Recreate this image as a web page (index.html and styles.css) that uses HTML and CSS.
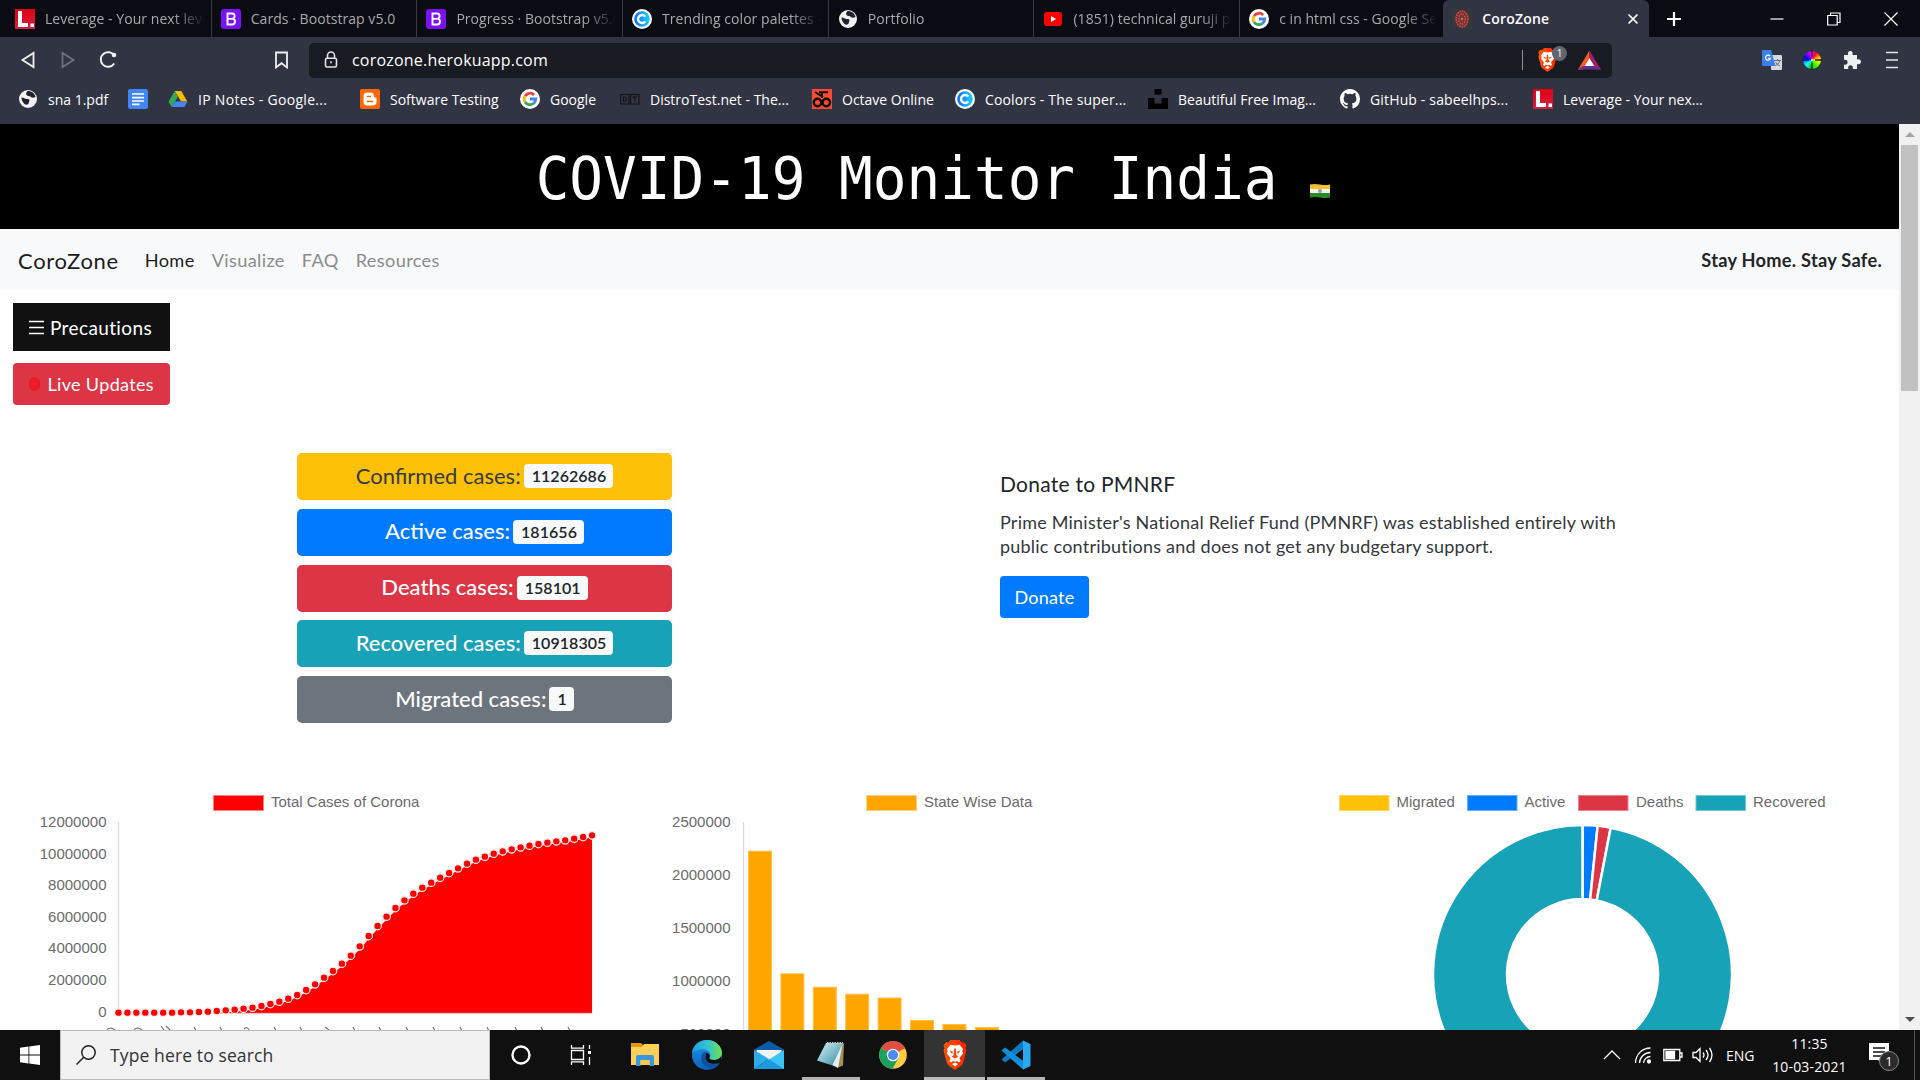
FILE: index.html
```html
<!DOCTYPE html>
<html lang="en">
<head>
<meta charset="utf-8">
<title>CoroZone</title>
<link rel="stylesheet" href="styles.css">
</head>
<body>
<svg class="defs" width="0" height="0">
  <defs>
    <linearGradient id="gRed" x1="0" y1="0" x2="0" y2="1"><stop offset="0" stop-color="#e3000f"/><stop offset="1" stop-color="#d11f45"/></linearGradient>
    <linearGradient id="gCool" x1="0" y1="0" x2="1" y2="0"><stop offset="0" stop-color="#0a6cff"/><stop offset="1" stop-color="#22d0ff"/></linearGradient>
    <linearGradient id="gEdge" x1="0" y1="0" x2="1" y2="0"><stop offset="0" stop-color="#1b9de2"/><stop offset=".5" stop-color="#33c3d8"/><stop offset="1" stop-color="#6be04a"/></linearGradient>
    <linearGradient id="gEdge2" x1="0" y1="0" x2="0" y2="1"><stop offset="0" stop-color="#1a9de8"/><stop offset="1" stop-color="#0c5fc0"/></linearGradient>
    <linearGradient id="gBrave" x1="0" y1="0" x2="1" y2="0"><stop offset="0" stop-color="#ff5601"/><stop offset="1" stop-color="#ff2200"/></linearGradient>
    <linearGradient id="gNote" x1="0" y1="0" x2="1" y2="1"><stop offset="0" stop-color="#d9f1f4"/><stop offset=".6" stop-color="#6fb5c4"/><stop offset="1" stop-color="#3a6c78"/></linearGradient>
    <symbol id="lev" viewBox="0 0 20 20"><rect width="20" height="20" fill="url(#gRed)"/><path d="M3 2h4v12h6v4H3z" fill="#fff"/><rect x="15.500" y="14.500" width="3.500" height="3.500" fill="#fff"/></symbol>
    <symbol id="boot" viewBox="0 0 20 20"><rect width="20" height="20" rx="3" fill="#7a12f5"/><path d="M6.500 4.500h4.200a2.600 2.600 0 0 1 .6 5.200 2.900 2.900 0 0 1-.4 5.800H6.500zM6.500 9.900h4.500" fill="none" stroke="#fff" stroke-width="1.900"/></symbol>
    <symbol id="cool" viewBox="0 0 20 20"><circle cx="10" cy="10" r="10" fill="#fff"/><circle cx="10" cy="10" r="7.800" fill="url(#gCool)"/><path d="M13.200 7.600a4 4 0 1 0 0 4.800" fill="none" stroke="#fff" stroke-width="2.400"/></symbol>
    <symbol id="globe" viewBox="0 0 20 20"><circle cx="10" cy="10" r="9" fill="#f1f1f1"/><path d="M3.500 8.500c3 .2 4 1.800 6.500 1.600 2.500 0 1 3 .5 4.500-.5 1.500-3 1.400-4 .4-1.500-1.500-3-3.500-3-6.500zM9.500 2c-1 1.500-2 2.500-1 4 1.200 1.500 3 .5 4.500 2 .8 1 2.500 1 4.500 0-1-4-4-6-8-6z" fill="#20222c"/></symbol>
    <symbol id="yt" viewBox="0 0 20 20"><rect x="1" y="3" width="18" height="14" rx="3" fill="#f00"/><path d="M8 7l5 3-5 3z" fill="#fff"/></symbol>
    <symbol id="goog" viewBox="0 0 20 20"><circle cx="10" cy="10" r="10" fill="#fff"/><g fill="none" stroke-width="2.800"><path d="M14.100 5.900A5.800 5.800 0 0 0 5 7.100" stroke="#ea4335"/><path d="M5 7.100a5.800 5.800 0 0 0 0 5.800" stroke="#fbbc05"/><path d="M5 12.900a5.800 5.800 0 0 0 8.700 1.400" stroke="#34a853"/><path d="M13.700 14.300a5.800 5.800 0 0 0 2.100-4.300H10" stroke="#4285f4"/></g></symbol>
    <symbol id="virus" viewBox="0 0 20 20"><rect width="20" height="20" fill="#38383b"/><ellipse cx="10" cy="10" rx="6.500" ry="8.500" fill="#7a3432"/><g fill="none" stroke="#cf4f4a" stroke-width="1.400" stroke-dasharray="1.500 1"><ellipse cx="10" cy="10" rx="6" ry="8"/><ellipse cx="10" cy="10" rx="3.300" ry="5"/></g><circle cx="10" cy="10" r="1.200" fill="#aa8080"/></symbol>
    <symbol id="docs" viewBox="0 0 20 20"><rect width="20" height="20" rx="2" fill="#4285f4"/><path d="M4 5h12M4 8.600h12M4 12h12M4 15.300h7.500" stroke="#fff" stroke-width="1.700"/></symbol>
    <symbol id="drive" viewBox="0 0 20 20"><path d="M6.700 2h6.600l6 10.500h-6.200z" fill="#fbbc04"/><path d="M6.700 2L.5 12.800l3.200 5.300L10 7.400z" fill="#34a853"/><path d="M3.700 18.100l3.200-5.600h12.600l-3.100 5.600z" fill="#4285f4"/></symbol>
    <symbol id="blog" viewBox="0 0 20 20"><rect width="20" height="20" rx="2" fill="#ff6600"/><path d="M3.500 7.300a3.800 3.800 0 0 1 3.800-3.800h3a3.600 3.600 0 0 1 3.600 3.500c0 1.300.8 1.500 1.700 1.600.6.100.9.400.9 1v3.100a3.800 3.800 0 0 1-3.800 3.800H7.300a3.800 3.800 0 0 1-3.800-3.800z" fill="#fff"/><path d="M7.500 7.500h2.800M7.500 12.500h5" stroke="#ff6600" stroke-width="1.700" stroke-linecap="round"/></symbol>
    <symbol id="dt" viewBox="0 0 20 20"><g fill="none" stroke="#15161c" stroke-width="1.200"><rect x=".6" y="5.500" width="8.300" height="9.500"/><rect x="10.600" y="5.500" width="8.300" height="9.500"/><path d="M3.500 8h1.300q1.700.2 1.700 2.200t-1.700 2.300H3.500zM12.700 8.200h4.300M14.800 8.200v4.600"/></g></symbol>
    <symbol id="oct" viewBox="0 0 20 20"><rect width="20" height="20" fill="#ff4a33"/><g fill="none" stroke="#0b0b0b" stroke-width="2.400"><circle cx="5.500" cy="13.500" r="3.700"/><circle cx="14.300" cy="13.500" r="3.700"/><path d="M3 3l8 5M7 3.200h9" stroke-width="2"/><path d="M10 4v5" stroke-width="2"/></g></symbol>
    <symbol id="uns" viewBox="0 0 20 20"><path d="M6.500 0h7v5.500h-7zM0 9h6.500v5.500h7V9H20v11H0z" fill="#000"/></symbol>
    <symbol id="gh" viewBox="0 0 16 16"><path fill="#fff" d="M8 0C3.580 0 0 3.580 0 8c0 3.540 2.290 6.530 5.470 7.590.4.070.55-.17.55-.38 0-.19-.01-.82-.01-1.490-2.010.37-2.530-.49-2.690-.94-.09-.23-.48-.94-.82-1.130-.28-.15-.68-.52-.01-.53.63-.01 1.080.58 1.230.82.72 1.210 1.870.87 2.330.66.070-.52.28-.87.51-1.070-1.780-.2-3.640-.89-3.640-3.950 0-.87.31-1.590.82-2.150-.08-.2-.36-1.020.08-2.120 0 0 .67-.21 2.200.82a7.600 7.600 0 0 1 4 0c1.530-1.040 2.200-.82 2.200-.82.44 1.100.16 1.920.08 2.120.51.56.82 1.270.82 2.150 0 3.070-1.870 3.750-3.650 3.950.29.25.54.73.54 1.480 0 1.070-.01 1.930-.01 2.200 0 .21.15.46.55.38A8 8 0 0 0 16 8c0-4.420-3.580-8-8-8z"/></symbol>
    <symbol id="brave" viewBox="0 0 26 30"><path d="M6.500 2.500L8.500 0h9l2 2.500 2.500-.3 2.500 3-1 3 1 2-3.200 12.300q-.6 2-2.300 3.200L13 30l-6-4.300q-1.700-1.200-2.300-3.200L1.500 10.200l1-2-1-3 2.500-3z" fill="url(#gBrave)"/><path d="M13 5.500l4.500-.8 3.500 4.300-.7 2.500 1 1.700-3.300 4-.5 1.600 1.200 2-1.700 1.600-2-1.400-2 .8-2-.8-2 1.400-1.700-1.600 1.200-2-.5-1.600-3.300-4 1-1.700L5 9l3.500-4.300zM13 22.500l3 1.500-3 2.500-3-2.500z" fill="#fff"/><path d="M7.500 10.500l3.500 1.300-.8 2.200zM18.500 10.500L15 11.800l.8 2.200zM12.200 8.500h1.600l.6 6.500 1.800 1.700-3.200 1.800-3.200-1.800 1.800-1.700z" fill="#ff4500"/></symbol>
  </defs>
</svg>

<header class="browser">
  <div class="tabs">
    <div class="tab"><svg><use href="#lev"/></svg><span class="fade">Leverage - Your next level</span></div>
    <div class="tab"><svg><use href="#boot"/></svg><span class="fade short">Cards · Bootstrap v5.0</span></div>
    <div class="tab"><svg><use href="#boot"/></svg><span class="fade">Progress · Bootstrap v5.0</span></div>
    <div class="tab"><svg><use href="#cool"/></svg><span class="fade">Trending color palettes - Co</span></div>
    <div class="tab"><svg><use href="#globe"/></svg><span class="fade">Portfolio</span></div>
    <div class="tab"><svg><use href="#yt"/></svg><span class="fade">(1851) technical guruji pro</span></div>
    <div class="tab last"><svg><use href="#goog"/></svg><span class="fade">c in html css - Google Search</span></div>
    <div class="tab active"><svg><use href="#virus"/></svg><span>CoroZone</span><svg class="x" viewBox="0 0 12 12"><path d="M1.500 1.500l9 9M10.500 1.500l-9 9"/></svg></div>
    <svg class="plus" viewBox="0 0 16 16"><path d="M8 1v14M1 8h14"/></svg>
    <div class="winbtns">
      <svg viewBox="0 0 14 14"><path d="M.5 7h13"/></svg>
      <svg viewBox="0 0 14 14"><path d="M.7 3.500h9.500V13H.7zM3.500 3.500V1h9.500v9.500h-2.800"/></svg>
      <svg viewBox="0 0 14 14"><path d="M.5.5l13 13M13.500.5l-13 13"/></svg>
    </div>
  </div>
  <div class="toolbar">
    <svg class="nav" viewBox="0 0 20 20"><path d="M15.500 3v14L4.500 10z"/></svg>
    <svg class="nav dim" viewBox="0 0 20 20"><path d="M4.500 3v14l11-7z"/></svg>
    <svg class="nav reload" viewBox="0 0 20 20"><path d="M16.200 13.500A7.300 7.300 0 1 1 16.500 6"/><circle cx="16" cy="5" r="2.300" fill="#f0f0f2" stroke="none"/></svg>
    <svg class="nav mark" viewBox="0 0 20 20"><path d="M4 2.500h11v15L9.500 13.200 4 17.500z"/></svg>
    <div class="url">
      <svg class="lock" viewBox="0 0 14 18"><path d="M3.500 7V4.500a3.500 3.500 0 0 1 7 0V7"/><rect x="1.500" y="7.200" width="11" height="8.800" rx="1.500"/><path d="M7 10.300v2"/></svg>
      <span>corozone.herokuapp.com</span>
      <i class="divider"></i>
      <div class="shield"><svg><use href="#brave"/></svg><b>1</b></div>
      <svg class="bat" viewBox="0 0 24 20"><path d="M12 0L0 20h5l7-12z" fill="#ff5a1c"/><path d="M12 0l12 20h-5L12 8z" fill="#9e1f63"/><path d="M0 20h24l-5-3.700H5z" fill="#662d91"/><path d="M12 8l5 8.300H7z" fill="#fff"/></svg>
    </div>
    <div class="ext">
      <svg viewBox="0 0 20 20"><rect x="9" y="5" width="11" height="15" rx="1" fill="#d7dadd"/><path d="M12 10.500h7M15.500 9v1.500M17.800 10.800q-.5 3-4.500 5M13.600 12q1 2.800 4.400 4" stroke="#616f7c" fill="none"/><path d="M1.200 0H9l4.500 16H1.200Q0 16 0 14.800V1.200Q0 0 1.200 0z" fill="#3d80ea"/><path d="M8 6.200a2.500 2.500 0 1 0 .4 2.200H6.200" fill="none" stroke="#fff" stroke-width="1.300"/></svg>
      <div class="wheel"><svg viewBox="0 0 20 20"><path d="M10 0v7M10 13v7M0 10h7M13 10h7" stroke="#1b1b20" stroke-width="1.300"/><circle cx="10" cy="10" r="1" fill="#eee"/></svg></div>
      <svg viewBox="0 0 20 20"><path fill="#eef0f2" d="M2 5h4.200C5.300 2.800 6.300 1 8.300 1s3 1.800 2.100 4H15v4.500c2-.8 4 0 4 2.200s-2 3-4 2.200V19h-4.300c.7-2.300-.4-3.700-2.200-3.700S5.700 16.700 6.300 19H2v-4.500c2.300.7 3.600-.4 3.600-2.200S4.300 9.500 2 10z"/></svg>
      <svg viewBox="0 0 20 20"><path d="M4 2.500h12M4 10h12M4 17.500h12" stroke="#e6e6ea" stroke-width="1.700"/></svg>
    </div>
  </div>
  <div class="bookmarks">
    <a><svg><use href="#globe"/></svg>sna 1.pdf</a>
    <a><svg><use href="#docs"/></svg></a>
    <a class="wide"><svg><use href="#drive"/></svg>IP Notes - Google...</a>
    <a><svg><use href="#blog"/></svg>Software Testing</a>
    <a><svg><use href="#goog"/></svg>Google</a>
    <a><svg><use href="#dt"/></svg>DistroTest.net - The...</a>
    <a><svg><use href="#oct"/></svg>Octave Online</a>
    <a class="mid-wide"><svg><use href="#cool"/></svg>Coolors - The super...</a>
    <a><svg><use href="#uns"/></svg>Beautiful Free Imag...</a>
    <a class="mid-wide"><svg><use href="#gh"/></svg>GitHub - sabeelhps...</a>
    <a><svg><use href="#lev"/></svg>Leverage - Your nex...</a>
  </div>
</header>

<div class="view">
  <main class="page">
    <h1 class="title"><span>COVID-19 Monitor India</span>
      <svg class="flag" viewBox="0 0 20 14"><path d="M0 .5q5-1 10 0t10 0V5H0z" fill="#f7c12c"/><path d="M0 5h20v4H0z" fill="#f4f4f0"/><path d="M0 9h20v4.500q-5 1-10 0t-10 0z" fill="#2c8a26"/><circle cx="10" cy="7" r="2" fill="#8d9cc4"/></svg>
    </h1>
    <nav class="navbar">
      <a class="brand">CoroZone</a><a class="on">Home</a><a>Visualize</a><a>FAQ</a><a>Resources</a>
      <strong>Stay Home. Stay Safe.</strong>
    </nav>
    <div class="side">
      <button class="prec"><svg viewBox="0 0 15 15"><path d="M0 1.500h15M0 7.500h15M0 13.500h15"/></svg>Precautions</button>
      <button class="live"><i></i>Live Updates</button>
    </div>
    <section class="mid">
      <div class="cases">
        <div class="case warn">Confirmed cases: <b>11262686</b></div>
        <div class="case blue">Active cases: <b>181656</b></div>
        <div class="case red">Deaths cases: <b>158101</b></div>
        <div class="case teal">Recovered cases: <b>10918305</b></div>
        <div class="case gray">Migrated cases: <b>1</b></div>
      </div>
      <div class="donate">
        <h5>Donate to PMNRF</h5>
        <p>Prime Minister's National Relief Fund (PMNRF) was established entirely with<br>public contributions and does not get any budgetary support.</p>
        <button>Donate</button>
      </div>
    </section>
    <section class="charts">
      <svg id="line" viewBox="0 0 640 250">
        <rect x="213.500" y="15.500" width="50" height="15" fill="red" stroke="#ff8080"/>
        <text x="271" y="27">Total Cases of Corona</text>
        <g text-anchor="end">
          <text x="106.500" y="47">12000000</text><text x="106.500" y="79">10000000</text><text x="106.500" y="110">8000000</text><text x="106.500" y="142">6000000</text><text x="106.500" y="173">4000000</text><text x="106.500" y="205">2000000</text><text x="106.500" y="237">0</text>
        </g>
        <path d="M118.500 42v191" class="axis"/>
        <g id="points"></g>
        <path class="ticks" d="M107 249.500q4-3 8 .5M134 249.500q4-3 8 .5M161 246l3 4M166 246l4 4M194 247l2 4M220 247l2 4M244 249q3-3 5 1M274 247l2 4M300 247l2 4M325 247l4 3M353 247l2 4M379 247l2 4M406 247l2 4M433 247l2 4M460 247l2 4M487 247l2 4M515 247l2 4M541 247l2 4M568 247l2 4"/>
      </svg>
      <svg id="bar" viewBox="640 0 640 250">
        <rect x="866.500" y="15.500" width="50" height="15" fill="orange" stroke="#ffd27f"/>
        <text x="924" y="27">State Wise Data</text>
        <g text-anchor="end">
          <text x="730.500" y="47">2500000</text><text x="730.500" y="100">2000000</text><text x="730.500" y="153">1500000</text><text x="730.500" y="206">1000000</text><text x="730.500" y="259">500000</text>
        </g>
        <path d="M743.500 42v208" class="axis"/>
        <g id="bars" fill="orange" stroke="#ffc04d"></g>
      </svg>
      <svg id="ring" viewBox="1280 0 619 250">
        <rect x="1339.500" y="15.500" width="49.500" height="15" fill="#ffc107" stroke="#ffd75e"/><text x="1396.500" y="27">Migrated</text>
        <rect x="1467.500" y="15.500" width="49.500" height="15" fill="#007bff" stroke="#66b0ff"/><text x="1524.500" y="27">Active</text>
        <rect x="1578.500" y="15.500" width="49.500" height="15" fill="#dc3545" stroke="#ea868f"/><text x="1636" y="27">Deaths</text>
        <rect x="1696" y="15.500" width="49.500" height="15" fill="#17a2b8" stroke="#74c7d4"/><text x="1753" y="27">Recovered</text>
        <g id="slices" stroke="#fff" stroke-width="2.500"></g>
      </svg>
    </section>
  </main>
  <div class="scroll"><i class="up"></i><div class="thumb"></div><i class="down"></i></div>
</div>

<footer class="taskbar">
  <div class="start"><svg viewBox="0 0 20 20"><path d="M0 2.800l8.500-1.200v8H0zM9.300 1.500L20 0v9.600H9.300zM0 10.400h8.500v8L0 17.200zM9.300 10.400H20V20L9.300 18.500z" fill="#fff"/></svg></div>
  <div class="search"><svg viewBox="0 0 20 20"><circle cx="12.500" cy="7.500" r="6.700"/><path d="M7.700 12.300L.5 19.500"/></svg>Type here to search</div>
  <div class="app"><svg viewBox="0 0 30 30"><circle cx="15" cy="15" r="8.500" fill="none" stroke="#fff" stroke-width="2.400"/></svg></div>
  <div class="app"><svg viewBox="0 0 30 30"><path d="M3.500 5v3.200h12V5M3.500 25v-3.200h12V25M3.500 10.500h12v9h-12zM21.500 5v4M21.500 17v8" fill="none" stroke="#fff" stroke-width="1.300"/><path d="M20 11h3v3h-3z" fill="#fff"/></svg></div>
  <div class="app"><svg viewBox="0 0 30 30"><path d="M1 3h10l2.500 2.500L12 8H1z" fill="#dd9a0c"/><path d="M1 7h11l2-3h15v21H1z" fill="#fdd05a"/><path d="M6 26V17q0-2 2-2h14q2 0 2 2v9h-4.500v-6h-9v6z" fill="#3b97dd"/><path d="M10.500 20h9v5h-9z" fill="#fbc94a"/></svg></div>
  <div class="app"><svg viewBox="0 0 30 30"><circle cx="15" cy="15" r="15" fill="url(#gEdge2)"/><path d="M0 13.500C.5 5 7.300 0 15 0c8.500 0 15 6.300 15 12.500 0 5-3.800 7.500-8 7.500-3.500 0-5-1.300-4.300-2.300C20 14 17 9.300 11 9.300 5.500 9.300 1 11.800 0 13.500z" fill="url(#gEdge)"/><path d="M13.300 11.500C7 14 7.500 26 18.500 28.300q5-1 9.300-5.800c-4.500 2-11 .8-12.800-3.500-1-2.500-.5-5-1.700-7.500z" fill="#12509e"/><path d="M14 12.500c3.500 1 4.500 3 3.500 5-.7 1.300.8 2.500 4.500 2.500 3 0 5.500-1 7-3.500l1 4-2.500 2.500c-5 1.500-12 1-13.500-4-.7-2.500.5-5 0-6.500z" fill="#101010"/></svg></div>
  <div class="app"><svg viewBox="0 0 30 30"><path d="M0 9.500L15 1l15 8.500V18H0z" fill="#0b5aa8"/><path d="M2.500 10h25v10h-25z" fill="#f3f3f3"/><path d="M0 10l15 9-15 10z" fill="#29aeea"/><path d="M30 10L0 29h30z" fill="#3cc4f5"/><path d="M15 19.300L30 29H0z" fill="#1d97e0"/></svg></div>
  <div class="app run"><svg viewBox="0 0 30 30"><path d="M22 3l6 .5-1 22-5 2z" fill="#a98d58"/><path d="M10 3h16l-5 24L1 20.500z" fill="url(#gNote)"/><path d="M26.500 4l-4.500 24-5.500-3z" fill="#e3eef0"/><path d="M11 3h16" stroke="#c9c9c9" stroke-width="2" stroke-dasharray="1.500 1"/></svg></div>
  <div class="app"><svg viewBox="0 0 30 30"><circle cx="15" cy="15" r="13.800" fill="#ffcd40"/><path d="M15 15L3 8.100A13.800 13.800 0 0 1 27 8.100z" fill="#dd5144"/><path d="M15 15L3 8.100A13.800 13.800 0 0 0 14.500 28.800L20.500 18z" fill="#1ba15f"/><path d="M15 8.500h12.200l-1-2-11-1z" fill="#dd5144"/><circle cx="15" cy="15" r="6.300" fill="#f5f5f5"/><circle cx="15" cy="15" r="5" fill="#4a8af4"/></svg></div>
  <div class="app cur"><svg viewBox="0 0 26 30"><use href="#brave"/></svg></div>
  <div class="app run"><svg viewBox="0 0 30 30"><path d="M22 .5l7.500 3.500v22L22 29.500z" fill="#28a8ef"/><path d="M22 .5v8.700L4 22.500l-3.500-3L22 .5z" fill="#0a7cc4"/><path d="M22 29.500v-8.700L4 7.500l-3.500 3L22 29.500z" fill="#1090dc"/></svg></div>
  <div class="tray">
    <svg class="t1" viewBox="0 0 20 20"><path d="M2 14l8-8 8 8"/></svg>
    <svg class="t2" viewBox="0 0 20 20"><path d="M2.500 18A15 15 0 0 1 17.500 3M6.500 18A11 11 0 0 1 17.500 7.500M10.500 18a7 7 0 0 1 7-6.500"/><circle cx="16" cy="16.500" r="1.500" fill="#fff"/></svg>
    <svg class="t3" viewBox="0 0 20 20"><path d="M.8 4.500h16v11h-16zM17 8h2v4h-2"/><path d="M3 6.500h8.500v7H3z" fill="#fff"/></svg>
    <svg class="t4" viewBox="0 0 22 20"><path d="M1 7.500h3l4-4v13l-4-4H1zM11 7.500q2 2.500 0 5M14 5q4 5 0 10M17.500 3q5 7 0 14"/></svg>
    <span class="eng">ENG</span>
    <div class="clock"><span>11:35</span><span>10-03-2021</span></div>
    <div class="notif"><svg viewBox="0 0 20 20"><path d="M0 0h20v17h-7v3l-4-3H0z" fill="#fff"/><path d="M4 5h12M4 9h12M4 13h8" stroke="#101010" stroke-width="1.300"/></svg><b>1</b></div>
    <i class="peek"></i>
  </div>
</footer>
<script src="charts.js"></script>
</body>
</html>
```
FILE: styles.css
```css
* { box-sizing: border-box; }
body { margin: 0; width: 1920px; height: 1080px; overflow: hidden; background: #fff; font-family: "Open Sans", "Noto Sans", sans-serif; display: flex; flex-direction: column; }
.defs { position: absolute; }
button { border: 0; font: inherit; margin: 0; padding: 0; }

.browser { height: 124px; background: #313443; color: #fff; flex: none; }
.tabs { height: 37px; background: #0b0b14; display: flex; align-items: stretch; padding-left: 6px; }
.tab { width: 205.700px; display: flex; align-items: center; padding: 0 6px 0 9px; font-size: 14px; color: #a9a9ab; border-right: 1px solid #3b3b40; white-space: nowrap; }
.tab svg { width: 20px; height: 20px; flex: none; margin-right: 10px; }
.tab span { letter-spacing: .05px; }
.tab .fade { overflow: hidden; flex: 1; -webkit-mask-image: linear-gradient(to right, #000 80%, transparent 100%); mask-image: linear-gradient(to right, #000 80%, transparent 100%); }
.tab .short { -webkit-mask-image: none; mask-image: none; }
.tab.last { border-right: 0; width: 203px; }
.tab.active { width: 206px; background: #313443; border: 0; border-radius: 6px 6px 0 0; color: #fff; font-weight: 600; padding-right: 10px; }
.tab.active span { letter-spacing: .2px; }
.tab.active .x { margin: 0 0 0 auto; width: 12px; height: 12px; stroke: #fff; stroke-width: 1.700; }
.plus { width: 16px; height: 16px; margin: 11px 0 0 17px; stroke: #fff; stroke-width: 2.200; }
.winbtns { margin-left: auto; display: flex; gap: 43px; padding: 12px 22px 0 0; }
.winbtns svg { width: 14px; height: 14px; fill: none; stroke: #fff; stroke-width: 1.200; }

.toolbar { height: 46px; display: flex; align-items: center; padding: 0 18px 0 18px; }
.nav { width: 20px; height: 20px; fill: none; stroke: #f0f0f2; stroke-width: 1.800; margin-right: 20px; }
.nav.dim { stroke: #6e707b; }
.nav.reload { stroke-width: 2; margin-right: 154px; }
.nav.mark { margin-right: 17px; }
.url { width: 1303px; height: 35px; background: #181b21; border-radius: 5px; display: flex; align-items: center; font-size: 16px; padding: 0 11px 0 15px; }
.url span { letter-spacing: .2px; }
.lock { width: 14px; height: 18px; fill: none; stroke: #e2e2e4; stroke-width: 1.600; margin-right: 14px; }
.divider { width: 1px; height: 20px; background: #8c8e95; margin-left: auto; }
.shield { width: 33px; height: 24px; margin: 0 8px 0 14px; position: relative; }
.shield svg { width: 21px; height: 24px; }
.shield b { position: absolute; left: 15px; top: -2px; width: 15px; height: 15px; border-radius: 8px; background: #62656f; font-size: 10px; line-height: 15px; text-align: center; font-weight: 400; }
.bat { width: 23px; height: 20px; }
.ext { margin-left: auto; display: flex; align-items: center; gap: 20px; }
.ext svg { width: 20px; height: 20px; display: block; }
.wheel { width: 18px; height: 18px; margin: 0 1px; border-radius: 50%; background: conic-gradient(#f0f, #f02, #f80, #ff0 25%, #0f0 45%, #0a0, #0fa, #0ff 65%, #00f 80%, #80f, #f0f); }
.wheel svg { margin: -1px; }

.bookmarks { display: grid; grid-template-columns: 110px 40px 192px 160px 100px 192px 143px 193px 192px 193px 200px; padding: 6px 0 0 18px; font-size: 14px; }
.bookmarks a { display: flex; align-items: center; height: 20px; white-space: nowrap; }
.bookmarks svg { width: 20px; height: 20px; margin-right: 10px; flex: none; }
.bookmarks .wide { letter-spacing: .3px; }
.bookmarks .mid-wide { letter-spacing: .15px; }

.view { flex: 1; display: flex; min-height: 0; }
.page { width: 1899px; overflow: hidden; font-family: Lato, sans-serif; color: #212529; }
.title { margin: 0; height: 105px; background: #000; color: #fff; display: flex; align-items: center; justify-content: center; font: 400 56px/105px "DejaVu Sans Mono", monospace; padding-right: 33px; }
.title span { transform: translateY(2px) scaleY(1.05); }
.flag { width: 20px; height: 14px; margin: 29px 0 0 33px; }
.navbar { height: 61px; background: #f8f9fa; display: flex; align-items: center; padding: 1px 17px 0 18px; font-size: 18.200px; color: #8a8b8c; }
.navbar a { margin-right: 17px; letter-spacing: .35px; }
.navbar .brand { color: #1c1d1e; font-size: 22px; margin-right: 26px; letter-spacing: .65px; }
.navbar .on { color: #1c1d1e; }
.navbar strong { margin-left: auto; color: #212529; letter-spacing: .28px; }
.side { padding: 13px; display: flex; flex-direction: column; gap: 12px; width: 183px; height: 128px; color: #fff; }
.side button { color: #fff; display: flex; align-items: center; padding: 0 16px; width: 157px; white-space: nowrap; }
.prec { background: #111; height: 48px; font-size: 19px; letter-spacing: .38px; }
.prec svg { width: 15px; height: 15px; stroke: #fff; stroke-width: 1.400; margin-right: 6px; }
.live { background: #dc3545; height: 42px; border-radius: 4px; font-size: 18px; letter-spacing: .35px; }
.live i { width: 13px; height: 14px; border-radius: 7px; background: #ed1c24; margin-right: 7px; }
.mid { display: flex; height: 362px; padding: 35px 0 0 297px; }
.cases { width: 375px; display: flex; flex-direction: column; gap: 8.800px; }
.case { height: 47px; flex: none; border-radius: 5px; display: flex; align-items: center; justify-content: center; gap: 3px; color: #fff; font-size: 22px; font-weight: 500; padding-bottom: 3px; }
.case b { background: #f8f9fa; color: #212529; border-radius: 4px; height: 24px; line-height: 24px; padding: 0 7px 0 8px; font-size: 16px; font-weight: 600; letter-spacing: .05px; margin-top: 2px; }
.warn { background: #ffc107; color: #343a40; font-weight: 400; }
.blue { background: #007bff; }
.red { background: #dc3545; }
.teal { background: #17a2b8; }
.gray { background: #6c757d; }
.donate { margin-left: 328px; padding-top: 18px; }
.donate h5 { margin: 0; font-size: 21px; font-weight: 400; line-height: 26px; letter-spacing: .25px; }
.donate p { margin: 13px 0 17px; font-size: 18px; line-height: 24.300px; white-space: nowrap; letter-spacing: .22px; color: #33373b; }
.donate button { background: #007bff; color: #fff; width: 89px; height: 42px; border-radius: 4px; font-size: 18px; letter-spacing: .25px; }
.charts { display: grid; grid-template-columns: 640px 640px 619px; height: 250px; }
.charts svg { width: 100%; height: 250px; display: block; }
.charts text { font: 15px "Liberation Sans", sans-serif; fill: #6b6b6b; }
.axis { stroke: #dcdcdc; stroke-width: 1.300; fill: none; }
.ticks { stroke: #777; fill: none; stroke-width: 1.200; }
.scroll { width: 21px; background: #f1f1f1; display: flex; flex-direction: column; align-items: center; padding: 8px 0; }
.scroll i { border: 5px solid transparent; }
.up { border-bottom-color: #a3a3a3 !important; border-top: 0 !important; }
.down { border-top-color: #505050 !important; border-bottom: 0 !important; margin-top: auto; }
.thumb { width: 17px; height: 246px; background: #c1c1c1; margin-top: 8px; }

.taskbar { height: 50px; background: #101010; display: flex; color: #fff; flex: none; }
.start { width: 60px; display: flex; align-items: center; justify-content: center; }
.start svg { width: 20px; height: 20px; }
.search { width: 430px; background: #f2f2f2; border: 1px solid #bdbdbd; color: #333; display: flex; align-items: center; font-size: 17.500px; letter-spacing: .12px; padding-left: 15px; }
.search svg { width: 20px; height: 20px; margin-right: 14px; fill: none; stroke: #222; stroke-width: 1.500; }
.app { width: 62px; display: flex; align-items: center; justify-content: center; border-bottom: 3px solid transparent; padding-top: 3px; flex: none; }
.app svg { width: 30px; height: 30px; }
.app.run { border-image: linear-gradient(to right, transparent 5px, #b3b3b3 5px, #b3b3b3 57px, transparent 57px) 3; }
.app.cur { width: 61px; background: #333; border-bottom-color: #bbb; }
.tray { margin-left: auto; display: flex; align-items: center; font-size: 14px; }
.tray svg { width: 20px; height: 20px; fill: none; stroke: #fff; stroke-width: 1.300; }
.t1 { margin-right: 11px; } .t2 { margin-right: 10px; } .t3 { margin-right: 9px; }
.tray .t4 { width: 22px; margin-right: 12px; }
.eng { width: 31px; letter-spacing: 0; }
.clock { width: 105px; text-align: center; display: flex; flex-direction: column; line-height: 23px; padding-bottom: 1px; letter-spacing: .15px; }
.notif { position: relative; width: 20px; height: 20px; margin: -4px 25px 0 7px; }
.tray .notif svg { stroke: none; display: block; }
.notif b { position: absolute; left: 10px; top: 8px; width: 20px; height: 20px; border-radius: 50%; background: #2b2b2b; border: 1px solid #888; font-size: 13px; line-height: 18px; font-weight: 400; text-align: center; }
.peek { width: 1px; height: 50px; background: #555; margin-right: 5px; }
```
FILE: charts.js
```js
const NS = "http://www.w3.org/2000/svg";
function add(parent, tag, attrs) {
  const el = document.createElementNS(NS, tag);
  for (const key in attrs) el.setAttribute(key, attrs[key]);
  document.getElementById(parent).appendChild(el);
}

// Cumulative cases, as thirds of a pixel below the top of the chart.
const totals = [698,698,698,698,698,698,698,697,697,696,695,693,691,689,686,683,678,672,665,656,645,630,613,593,573,551,527,499,468,438,410,384,361,341,323,308,293,279,265,251,239,230,221,214,208,202,197,192,188,184,181,176,171,166];
const pts = totals.map((v, i) => [118.5 + i * 8.935, v / 3]);
const path = "M" + pts.map(p => p.join(" ")).join("L");
add("points", "path", { d: path + "V233H118.5Z", fill: "red" });
add("points", "path", { d: "M118 233.300H592", stroke: "#f3b3b3", fill: "none" });
add("points", "path", { d: path, stroke: "#fbf0f0", "stroke-width": 4, fill: "none" });
pts.forEach(p => add("points", "circle", { cx: p[0], cy: p[1], r: 3.8, fill: "red", stroke: "#fdf2f2", "stroke-width": 1.2 }));

[70.7, 193.3, 206.7, 213.7, 217.5, 240, 244, 247].forEach((top, i) =>
  add("bars", "rect", { x: 748.5 + i * 32.4, y: top + .5, width: 23, height: 300 }));

const cx = 1582.5, cy = 194.5, R = 149.5, r = 75.5;
function slice(from, to, fill) {
  const at = (rad, deg) => {
    const a = deg * Math.PI / 180;
    return (cx + rad * Math.sin(a)) + " " + (cy - rad * Math.cos(a));
  };
  const big = to - from > 180 ? 1 : 0;
  add("slices", "path", {
    d: `M${at(R, from)}A${R} ${R} 0 ${big} 1 ${at(R, to)}L${at(r, to)}A${r} ${r} 0 ${big} 0 ${at(r, from)}Z`, fill
  });
}
slice(0, 5.81, "#007bff");
slice(5.81, 10.87, "#dc3545");
slice(10.87, 360, "#17a2b8");
```
